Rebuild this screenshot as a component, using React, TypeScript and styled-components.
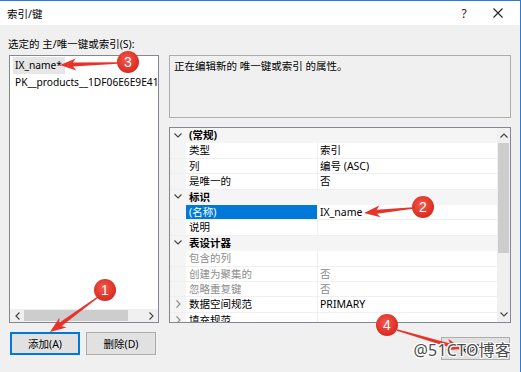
import styled, { createGlobalStyle } from 'styled-components';

const GlobalStyle = createGlobalStyle`
  html, body {
    margin: 0;
    padding: 0;
    background: #ffffff;
  }
  body {
    font-family: "Noto Sans", "Noto Sans CJK SC", sans-serif;
    font-size: 10.5px;
    color: #000;
  }
`;

type Row =
  | { kind: 'cat'; label: string }
  | {
      kind: 'prop';
      name: string;
      value?: string;
      disabled?: boolean;
      selected?: boolean;
      expandable?: boolean;
    };

const rows: Row[] = [
  { kind: 'cat', label: '(常规)' },
  { kind: 'prop', name: '类型', value: '索引' },
  { kind: 'prop', name: '列', value: '编号 (ASC)' },
  { kind: 'prop', name: '是唯一的', value: '否' },
  { kind: 'cat', label: '标识' },
  { kind: 'prop', name: '(名称)', value: 'IX_name', selected: true },
  { kind: 'prop', name: '说明' },
  { kind: 'cat', label: '表设计器' },
  { kind: 'prop', name: '包含的列', disabled: true },
  { kind: 'prop', name: '创建为聚集的', value: '否', disabled: true },
  { kind: 'prop', name: '忽略重复键', value: '否', disabled: true },
  { kind: 'prop', name: '数据空间规范', value: 'PRIMARY', expandable: true },
  { kind: 'prop', name: '填充规范', expandable: true },
];

const Page = styled.div`
  position: relative;
  width: 521px;
  height: 372px;
  overflow: hidden;
`;

const Window = styled.div`
  box-sizing: border-box;
  width: 521px;
  height: 372px;
  border-top: 1px solid #2b7ad6;
  border-right: 1px solid #2b7ad6;
  background: #f0f0f0;
  display: flex;
  flex-direction: column;
`;

const TitleBar = styled.div`
  height: 24px;
  background: #ffffff;
  display: flex;
  align-items: center;
  padding: 0 5px 0 7px;
`;

const Title = styled.span`
  flex: 1;
  font-size: 10.5px;
`;

const TitleButton = styled.div`
  width: 34px;
  height: 24px;
  display: flex;
  align-items: center;
  justify-content: center;
  font-size: 12px;
  color: #222;
`;

const Body = styled.div`
  flex: 1;
  display: flex;
  flex-direction: column;
  padding: 11px 9px 0 9px;
`;

const Label = styled.div`
  height: 16px;
  line-height: 16px;
  margin: 0 0 3px -1px;
`;

const Main = styled.div`
  display: flex;
  gap: 10px;
  height: 268px;
`;

const ListBox = styled.div`
  box-sizing: border-box;
  width: 150px;
  height: 268px;
  border: 1px solid #828790;
  background: #fff;
  display: flex;
  flex-direction: column;
  overflow: hidden;
`;

const ListItems = styled.div`
  flex: 1;
  display: flex;
  flex-direction: column;
  padding: 1px 0 0 3px;
  overflow: hidden;
`;

const ListItem = styled.div<{ $selected?: boolean }>`
  align-self: flex-start;
  height: 17px;
  line-height: 17px;
  padding: 0 3px 0 2px;
  font-size: 10.2px;
  white-space: nowrap;
  background: ${(p) => (p.$selected ? '#e6e6e6' : 'transparent')};
`;

const HScroll = styled.div`
  height: 13px;
  background: #f0f0f0;
  display: flex;
  align-items: center;
`;

const ScrollArrow = styled.div`
  width: 14px;
  height: 13px;
  display: flex;
  align-items: center;
  justify-content: center;
`;

const HThumb = styled.div`
  width: 104px;
  height: 11px;
  background: #cdcdcd;
`;

const ScrollSpacer = styled.div`
  flex: 1;
`;

const RightCol = styled.div`
  width: 342px;
  display: flex;
  flex-direction: column;
  gap: 9px;
`;

const Description = styled.div`
  box-sizing: border-box;
  height: 63px;
  border: 1px solid #adadad;
  padding: 2px 4px;
  line-height: 16px;
`;

const Grid = styled.div`
  box-sizing: border-box;
  height: 196px;
  border: 1px solid #828790;
  background: #fff;
  display: flex;
  overflow: hidden;
`;

const GridRows = styled.div`
  flex: 1;
  display: flex;
  flex-direction: column;
`;

const GridRow = styled.div<{ $cat?: boolean }>`
  flex: 0 0 15.4px;
  display: flex;
  align-items: stretch;
  background: ${(p) => (p.$cat ? '#f5f5f5' : '#fff')};
  border-bottom: 1px solid ${(p) => (p.$cat ? '#f5f5f5' : '#f0f0f0')};
  box-sizing: border-box;
  line-height: 14px;
`;

const Gutter = styled.div`
  width: 16px;
  background: #f5f5f5;
  display: flex;
  align-items: center;
  justify-content: center;
`;

const CatLabel = styled.div`
  padding-left: 3px;
  font-weight: 700;
`;

const NameCell = styled.div<{ $selected?: boolean; $disabled?: boolean }>`
  width: 128px;
  padding-left: 3px;
  border-right: 1px solid #f0f0f0;
  white-space: nowrap;
  background: ${(p) => (p.$selected ? '#0078d7' : 'transparent')};
  color: ${(p) => (p.$selected ? '#fff' : p.$disabled ? '#8d8d8d' : '#000')};
`;

const ValueCell = styled.div<{ $disabled?: boolean }>`
  flex: 1;
  padding-left: 2px;
  white-space: nowrap;
  color: ${(p) => (p.$disabled ? '#8d8d8d' : '#000')};
`;

const VScroll = styled.div`
  width: 13px;
  background: #f0f0f0;
  display: flex;
  flex-direction: column;
  align-items: center;
`;

const VArrow = styled.div`
  height: 15px;
  width: 13px;
  display: flex;
  align-items: center;
  justify-content: center;
`;

const VThumb = styled.div`
  width: 11px;
  height: 110px;
  background: #cdcdcd;
`;

const Footer = styled.div`
  display: flex;
  justify-content: space-between;
  align-items: flex-start;
  margin-top: 9px;
  padding-left: 1px;
`;

const ButtonGroup = styled.div`
  display: flex;
  gap: 6px;
`;

const Button = styled.div<{ $focused?: boolean; $width?: number }>`
  box-sizing: border-box;
  width: ${(p) => p.$width ?? 70}px;
  height: 23px;
  display: flex;
  align-items: center;
  justify-content: center;
  background: #e1e1e1;
  border: 1px solid ${(p) => (p.$focused ? '#0078d7' : '#adadad')};
  box-shadow: ${(p) => (p.$focused ? 'inset 0 0 0 1px #0078d7' : 'none')};
`;

const CloseButton = styled(Button)`
  margin-top: 5px;
  margin-right: 1px;
`;

const Overlay = styled.svg`
  position: absolute;
  left: 0;
  top: 0;
  pointer-events: none;
`;

const Watermark = styled.div`
  position: absolute;
  right: 10px;
  top: 337px;
  font-family: "Noto Sans", "Noto Sans CJK SC", sans-serif;
  font-size: 16px;
  color: #4d4d4d;
  text-shadow: 1px 0 0 #fff, -1px 0 0 #fff, 0 1px 0 #fff, 0 -1px 0 #fff,
    1px 1px 0 #fff, -1px -1px 0 #fff, 1px -1px 0 #fff, -1px 1px 0 #fff;
  letter-spacing: 0.2px;
`;

const ChevronDown = () => (
  <svg width="8" height="5" viewBox="0 0 8 5">
    <polyline points="0.5,0.5 4,4 7.5,0.5" fill="none" stroke="#444" strokeWidth="1.1" />
  </svg>
);

const ChevronRight = ({ color = '#888' }: { color?: string }) => (
  <svg width="5" height="8" viewBox="0 0 5 8">
    <polyline points="0.5,0.5 4,4 0.5,7.5" fill="none" stroke={color} strokeWidth="1.1" />
  </svg>
);

const ChevronLeft = () => (
  <svg width="5" height="8" viewBox="0 0 5 8">
    <polyline points="4.5,0.5 1,4 4.5,7.5" fill="none" stroke="#444" strokeWidth="1.2" />
  </svg>
);

const ChevronUp = () => (
  <svg width="8" height="5" viewBox="0 0 8 5">
    <polyline points="0.5,4.5 4,1 7.5,4.5" fill="none" stroke="#444" strokeWidth="1.2" />
  </svg>
);

function arrowPoints(x1: number, y1: number, x2: number, y2: number) {
  const dx = x2 - x1;
  const dy = y2 - y1;
  const len = Math.hypot(dx, dy);
  const ux = dx / len;
  const uy = dy / len;
  const nx = -uy;
  const ny = ux;
  const headLen = 13;
  const barb = 16;
  const headW = 6;
  const neckW = 2;
  const tailW = 0.7;
  const nkx = x2 - ux * headLen;
  const nky = y2 - uy * headLen;
  const bx = x2 - ux * barb;
  const by = y2 - uy * barb;
  const pts = [
    [x1 + nx * tailW, y1 + ny * tailW],
    [nkx + nx * neckW, nky + ny * neckW],
    [bx + nx * headW, by + ny * headW],
    [x2, y2],
    [bx - nx * headW, by - ny * headW],
    [nkx - nx * neckW, nky - ny * neckW],
    [x1 - nx * tailW, y1 - ny * tailW],
  ];
  return pts.map((p) => `${p[0].toFixed(1)},${p[1].toFixed(1)}`).join(' ');
}

const marks = [
  { n: '3', cx: 128, cy: 62, from: [118, 63], to: [60, 65] },
  { n: '2', cx: 423, cy: 207, from: [413, 208], to: [364, 213] },
  { n: '1', cx: 105, cy: 290, from: [98, 297], to: [50, 332] },
  { n: '4', cx: 387, cy: 325, from: [397, 330], to: [462, 349] },
];

const Annotations = () => (
  <Overlay width="521" height="372" viewBox="0 0 521 372">
    <defs>
      <radialGradient id="dot" cx="45%" cy="40%" r="60%">
        <stop offset="0%" stopColor="#f35a4e" />
        <stop offset="100%" stopColor="#d9281e" />
      </radialGradient>
    </defs>
    {marks.map((m) => (
      <g key={m.n}>
        <polygon points={arrowPoints(m.from[0], m.from[1], m.to[0], m.to[1])} fill="#e8332a" />
        <circle cx={m.cx} cy={m.cy} r="11" fill="url(#dot)" />
        <text
          x={m.cx}
          y={m.cy + 5}
          textAnchor="middle"
          fontFamily="Liberation Sans, sans-serif"
          fontSize="14"
          fill="#fff"
        >
          {m.n}
        </text>
      </g>
    ))}
  </Overlay>
);

const PropertyGrid = () => (
  <Grid>
    <GridRows>
      {rows.map((r, i) =>
        r.kind === 'cat' ? (
          <GridRow key={i} $cat>
            <Gutter>
              <ChevronDown />
            </Gutter>
            <CatLabel>{r.label}</CatLabel>
          </GridRow>
        ) : (
          <GridRow key={i}>
            <Gutter>{r.expandable && <ChevronRight />}</Gutter>
            <NameCell $selected={r.selected} $disabled={r.disabled}>
              {r.name}
            </NameCell>
            <ValueCell $disabled={r.disabled}>{r.value}</ValueCell>
          </GridRow>
        )
      )}
    </GridRows>
    <VScroll>
      <VArrow>
        <ChevronUp />
      </VArrow>
      <VThumb />
      <ScrollSpacer />
      <VArrow>
        <ChevronDown />
      </VArrow>
    </VScroll>
  </Grid>
);

export default function App() {
  return (
    <Page>
      <GlobalStyle />
      <Window>
        <TitleBar>
          <Title>索引/键</Title>
          <TitleButton>?</TitleButton>
          <TitleButton>
            <svg width="10" height="10" viewBox="0 0 10 10">
              <path d="M0.5 0.5 L9.5 9.5 M9.5 0.5 L0.5 9.5" stroke="#222" strokeWidth="1.1" />
            </svg>
          </TitleButton>
        </TitleBar>
        <Body>
          <Label>选定的 主/唯一键或索引(S):</Label>
          <Main>
            <ListBox>
              <ListItems>
                <ListItem $selected>IX_name*</ListItem>
                <ListItem>PK__products__1DF06E6E9E418</ListItem>
              </ListItems>
              <HScroll>
                <ScrollArrow>
                  <ChevronLeft />
                </ScrollArrow>
                <HThumb />
                <ScrollSpacer />
                <ScrollArrow>
                  <ChevronRight color="#444" />
                </ScrollArrow>
              </HScroll>
            </ListBox>
            <RightCol>
              <Description>正在编辑新的 唯一键或索引 的属性。</Description>
              <PropertyGrid />
            </RightCol>
          </Main>
          <Footer>
            <ButtonGroup>
              <Button $focused>添加(A)</Button>
              <Button>删除(D)</Button>
            </ButtonGroup>
            <CloseButton $width={69}>关闭(C)</CloseButton>
          </Footer>
        </Body>
      </Window>
      <Annotations />
      <Watermark>@51CTO博客</Watermark>
    </Page>
  );
}
